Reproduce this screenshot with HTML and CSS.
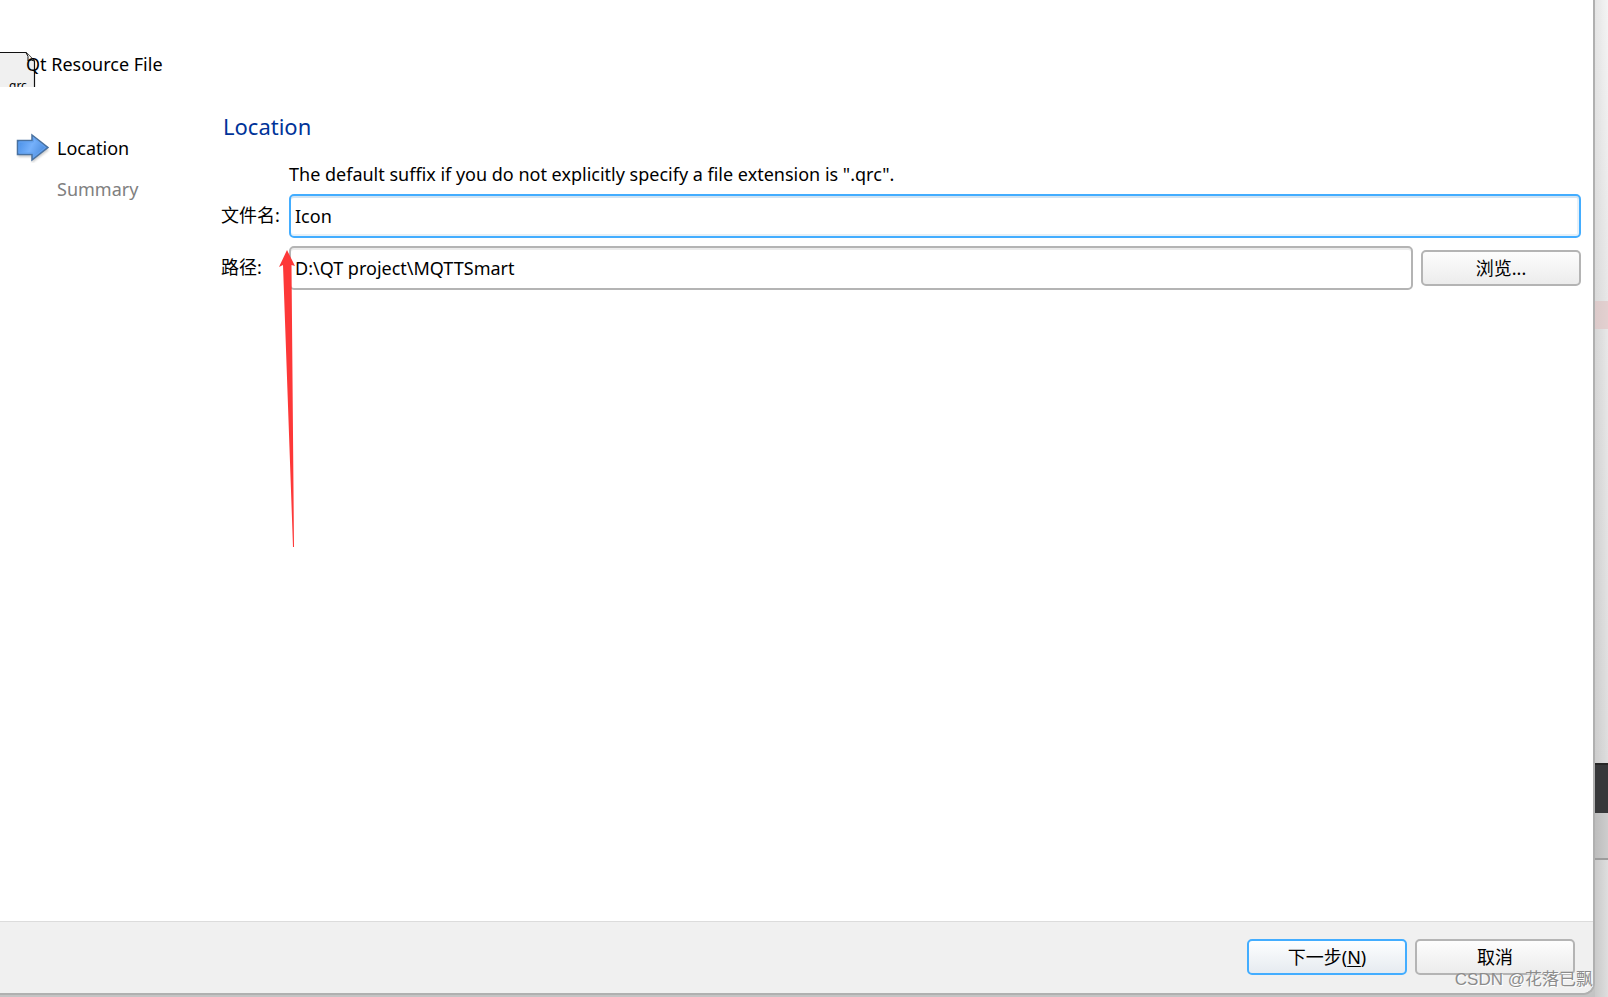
FILE: index.html
```html
<!DOCTYPE html>
<html lang="zh-CN">
<head>
<meta charset="utf-8">
<title>Qt Resource File</title>
<link rel="stylesheet" href="styles.css">
</head>
<body>
<div class="desktop">
  <main class="dialog">
    <header class="titlebar">
      <svg class="file-icon" width="36" height="36" viewBox="0 0 36 36" aria-hidden="true">
        <path d="M-4 1.500H26L34.500 10V40H-4Z" fill="#f0f0f0" stroke="#111" stroke-width="1.200"/>
        <path d="M26 1.500Q29 5 28 10Q31 8 34.500 10" fill="#fff" stroke="#111"/>
        <text class="icon-text" x="9" y="39">qrc</text>
      </svg>
      <h1 class="title">Qt Resource File</h1>
    </header>
    <div class="content">
      <nav class="steps">
        <div class="step step-current">
          <svg class="step-arrow" width="34" height="30" viewBox="0 0 34 30" aria-hidden="true">
            <defs>
              <linearGradient id="blue" x1="0" y1="0" x2="1" y2="0.400">
                <stop offset="0" stop-color="#3f88e2"/><stop offset="0.550" stop-color="#76b1fb"/><stop offset="1" stop-color="#4b8bdc"/>
              </linearGradient>
              <filter id="soft" x="-20%" y="-20%" width="140%" height="150%"><feGaussianBlur stdDeviation="1.200"/></filter>
            </defs>
            <path d="M2 10H16V4L33 17L16 30V24H2Z" fill="#999" opacity="0.500" filter="url(#soft)"/>
            <path d="M1.500 7.500H16V2L32 14.500L16 27V21.500H1.500Z" fill="url(#blue)" stroke="#49719f" stroke-width="1.500"/>
            <path d="M3 9H17.500V5L29.500 14.500L17.500 24V20H3Z" fill="none" stroke="#65a2ef"/>
          </svg>
          <span>Location</span>
        </div>
        <div class="step">Summary</div>
      </nav>
      <form class="page">
        <h2 class="heading">Location</h2>
        <div class="fields">
          <p class="hint">The default suffix if you do not explicitly specify a file extension is ".qrc".</p>
          <label class="label" for="name">文件名:</label>
          <input class="text-box text-box-active" id="name" type="text" value="Icon">
          <label class="label" for="path">路径:</label>
          <div class="path-row">
            <input class="text-box" id="path" type="text" value="D:\QT project\MQTTSmart">
            <button class="button" type="button">浏览...</button>
          </div>
        </div>
      </form>
    </div>
    <footer class="footer">
      <button class="button button-default" type="button">下一步(<u>N</u>)</button>
      <button class="button" type="button">取消</button>
    </footer>
    <svg class="pointer" width="18" height="298" viewBox="0 0 18 298" aria-hidden="true">
      <path d="M8 0L16 16L12.500 15L15 297H14L4 15L0 17Z" fill="#fd3838"/>
    </svg>
    <div class="watermark">CSDN @花落已飘</div>
  </main>
  <aside class="backdrop">
    <div class="band-top"></div>
    <div class="band-pink"></div>
    <div class="band-middle"></div>
    <div class="band-dark"></div>
    <div class="band-gray"></div>
    <div class="band-bottom"></div>
  </aside>
</div>
</body>
</html>
```
FILE: styles.css
```css
* { box-sizing: border-box; }

body {
  margin: 0;
  background: #c4c4c4;
  color: #000;
  font: 18px/24px "Noto Sans", "Noto Sans CJK SC", sans-serif;
}

.desktop {
  display: grid;
  grid-template-columns: 1fr 13px;
  min-height: 100vh;
}

.dialog {
  position: relative;
  display: flex;
  flex-direction: column;
  margin-bottom: 2px;
  background: #fff;
  border: solid #b0b0b0;
  border-width: 0 2px 2px 0;
  border-bottom-right-radius: 12px;
  overflow: hidden;
}

.titlebar {
  display: flex;
  padding-top: 51px;
}

.file-icon { margin-right: -10px; }

.icon-text { font: 12px "Noto Sans", sans-serif; }

.title {
  margin: 0;
  font-size: 18px;
  font-weight: 400;
  line-height: 26px;
}

.content {
  flex: 1;
  display: grid;
  grid-template-columns: 221px 1fr;
  padding: 23px 12px 0 0;
}

.steps { padding-top: 19px; }

.step {
  height: 40px;
  padding: 8px 0 8px 57px;
  color: #808080;
}

.step-current {
  display: flex;
  align-items: center;
  gap: 7px;
  padding: 0 0 2px 16px;
  color: #000;
}

.heading {
  margin: 0 0 20px;
  padding-left: 2px;
  color: #003399;
  font-size: 22px;
  font-weight: 400;
  line-height: 32px;
}

.fields {
  display: grid;
  grid-template-columns: 60px 1fr;
  align-items: center;
  gap: 8px;
}

.hint {
  grid-column: 2;
  margin: 0;
  line-height: 24px;
}

.label {
  padding-bottom: 2px;
  white-space: nowrap;
}

.text-box {
  width: 100%;
  min-width: 0;
  height: 44px;
  padding: 0 4px;
  border: 2px solid #b4b4b4;
  border-radius: 5px;
  box-shadow: inset 0 2px #ececec;
  background: #fff;
  color: #000;
  font: inherit;
  outline: 0;
}

.text-box-active {
  border-color: #43adff;
  box-shadow: inset 0 2px #d3e4f2, inset 0 -2px #e6f1f9, inset -2px 0 #e6f1f9;
}

.path-row {
  display: flex;
  align-items: center;
  gap: 8px;
}

.button {
  flex: none;
  width: 160px;
  height: 36px;
  padding: 0;
  border: 2px solid #b4b4b4;
  border-radius: 5px;
  background: linear-gradient(#fdfdfd, #ececec);
  color: #000;
  font: inherit;
}

.button-default {
  border-color: #43adff;
  background: linear-gradient(#fdfeff, #e6ebf0);
}

.button u {
  text-decoration-thickness: 1px;
  text-underline-offset: 2px;
}

.footer {
  display: flex;
  justify-content: flex-end;
  gap: 8px;
  padding: 17px 18px 18px 0;
  border-top: 1px solid #dcdcdc;
  background: #f0f0f0;
}

.pointer {
  position: absolute;
  left: 279px;
  top: 250px;
}

.watermark {
  position: absolute;
  right: 0;
  bottom: 1px;
  color: #8c8c8c;
  font: 17px/24px "Liberation Sans", "Noto Sans CJK SC", sans-serif;
  text-shadow: 1px 1px #fff;
}

.backdrop {
  display: grid;
  grid-template-rows: 301fr 28fr 434fr 50fr 47fr 137fr;
}

.band-top {
  background: linear-gradient(to right, #00000010, #00000000), linear-gradient(#f4f4f4, #e8e8e8);
}

.band-pink {
  background: linear-gradient(to right, #dccaca, #e3d0d0);
}

.band-middle {
  background: linear-gradient(to right, #00000014, #00000000), linear-gradient(#e8e8e8, #dedede);
}

.band-dark {
  border-top: 2px solid #272727;
  background: #37383a;
}

.band-gray {
  border-bottom: 2px solid #9c9c9c;
  background: linear-gradient(to right, #bdbdbd, #cdcdcd);
}

.band-bottom {
  background: linear-gradient(to right, #cacaca, #dedede);
}
```
